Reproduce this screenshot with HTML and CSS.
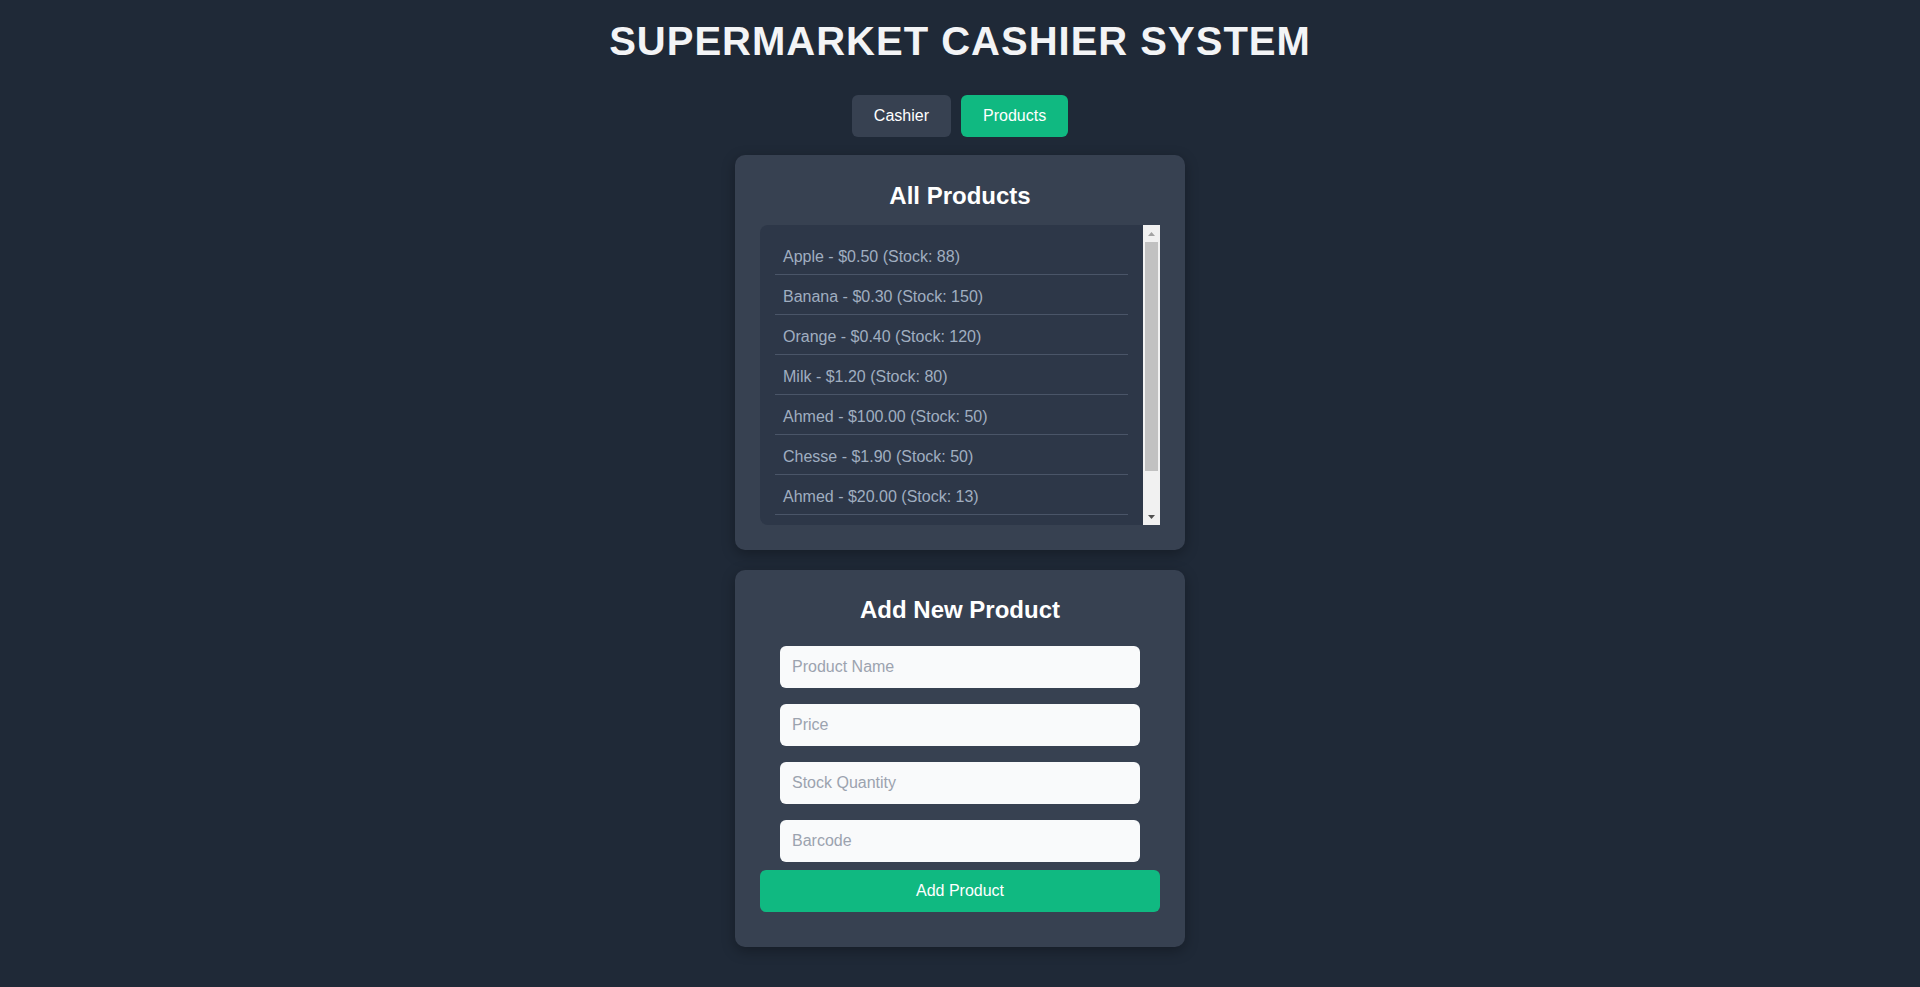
FILE: index.html
```html
<!DOCTYPE html>
<html lang="en">
<head>
<meta charset="utf-8">
<title>Supermarket Cashier System</title>
<link rel="stylesheet" href="styles.css">
</head>
<body>
<div class="app">
  <h1 class="app-title">SUPERMARKET CASHIER SYSTEM</h1>
  <nav class="tabs">
    <button class="tab">Cashier</button>
    <button class="tab tab-active">Products</button>
  </nav>
  <section class="card">
    <h2 class="card-title">All Products</h2>
    <div class="list-box">
      <ul class="product-list">
        <li class="product-item">Apple - $0.50 (Stock: 88)</li>
        <li class="product-item">Banana - $0.30 (Stock: 150)</li>
        <li class="product-item">Orange - $0.40 (Stock: 120)</li>
        <li class="product-item">Milk - $1.20 (Stock: 80)</li>
        <li class="product-item">Ahmed - $100.00 (Stock: 50)</li>
        <li class="product-item">Chesse - $1.90 (Stock: 50)</li>
        <li class="product-item">Ahmed - $20.00 (Stock: 13)</li>
      </ul>
      <div class="scrollbar">
        <div class="sb-btn">
          <svg width="7" height="4" viewBox="0 0 7 4"><polygon points="3.5,0 7,4 0,4" fill="#a3a3a3"/></svg>
        </div>
        <div class="sb-track">
          <div class="sb-thumb"></div>
        </div>
        <div class="sb-btn">
          <svg width="7" height="4" viewBox="0 0 7 4"><polygon points="0,0 7,0 3.5,4" fill="#505050"/></svg>
        </div>
      </div>
    </div>
  </section>
  <section class="card">
    <h2 class="card-title card-title-form">Add New Product</h2>
    <div class="fields">
      <input class="field" type="text" placeholder="Product Name">
      <input class="field" type="text" placeholder="Price">
      <input class="field" type="text" placeholder="Stock Quantity">
      <input class="field" type="text" placeholder="Barcode">
    </div>
    <button class="add-btn">Add Product</button>
  </section>
</div>
</body>
</html>
```
FILE: styles.css
```css
* {
  box-sizing: border-box;
}

html, body {
  margin: 0;
  padding: 0;
}

body {
  background: #1f2937;
  font-family: "Liberation Sans", Arial, sans-serif;
  color: #f3f4f6;
}

.app {
  display: flex;
  flex-direction: column;
  align-items: center;
  padding-bottom: 40px;
}

.app-title {
  margin: 18px 0 31px;
  font-size: 40px;
  line-height: 46px;
  font-weight: bold;
  letter-spacing: 1px;
  color: #f3f4f6;
}

.tabs {
  display: flex;
  gap: 10px;
  margin-bottom: 18px;
}

.tab {
  font-family: "Liberation Sans", Arial, sans-serif;
  font-size: 16px;
  line-height: 18px;
  padding: 12px 22px;
  border: none;
  border-radius: 6px;
  background: #374151;
  color: #ffffff;
  cursor: pointer;
}

.tab-active {
  background: #10b981;
}

.card {
  width: 450px;
  padding: 25px;
  background: #374151;
  border-radius: 10px;
  box-shadow: 0 4px 14px rgba(0, 0, 0, 0.3);
  display: flex;
  flex-direction: column;
  align-items: center;
  margin-bottom: 20px;
}

.card-title {
  margin: 0 0 15px;
  font-size: 24px;
  line-height: 31px;
  font-weight: bold;
  color: #ffffff;
  text-align: center;
}

.card-title-form {
  line-height: 30px;
  margin-bottom: 21px;
}

.list-box {
  display: flex;
  width: 400px;
  height: 300px;
  background: #2d3748;
  border-radius: 8px 0 0 8px;
  overflow: hidden;
  margin-top: -1px;
}

.product-list {
  flex: 1;
  list-style: none;
  margin: 0;
  padding: 10px 15px;
  overflow: hidden;
}

.product-item {
  padding: 12px 8px 8px;
  line-height: 19px;
  font-size: 16px;
  color: #a0aec0;
  border-bottom: 1px solid #4a5568;
  white-space: nowrap;
}

.scrollbar {
  width: 17px;
  display: flex;
  flex-direction: column;
  background: #f1f1f1;
}

.sb-btn {
  height: 17px;
  display: flex;
  align-items: center;
  justify-content: center;
}

.sb-btn svg {
  display: block;
}

.sb-track {
  flex: 1;
  padding: 0 2px;
}

.sb-thumb {
  height: 229px;
  background: #c1c1c1;
}

.fields {
  display: flex;
  flex-direction: column;
  gap: 16px;
  width: 360px;
}

.field {
  width: 100%;
  height: 42px;
  padding: 12px;
  border: none;
  border-radius: 6px;
  background: #f9fafb;
  font-family: "Liberation Sans", Arial, sans-serif;
  font-size: 16px;
  color: #111827;
  outline: none;
}

.field::placeholder {
  color: #9ca3af;
}

.add-btn {
  width: 400px;
  height: 42px;
  margin: 8px 0 10px;
  border: none;
  border-radius: 6px;
  background: #10b981;
  color: #ffffff;
  font-family: "Liberation Sans", Arial, sans-serif;
  font-size: 16px;
  cursor: pointer;
}
```
